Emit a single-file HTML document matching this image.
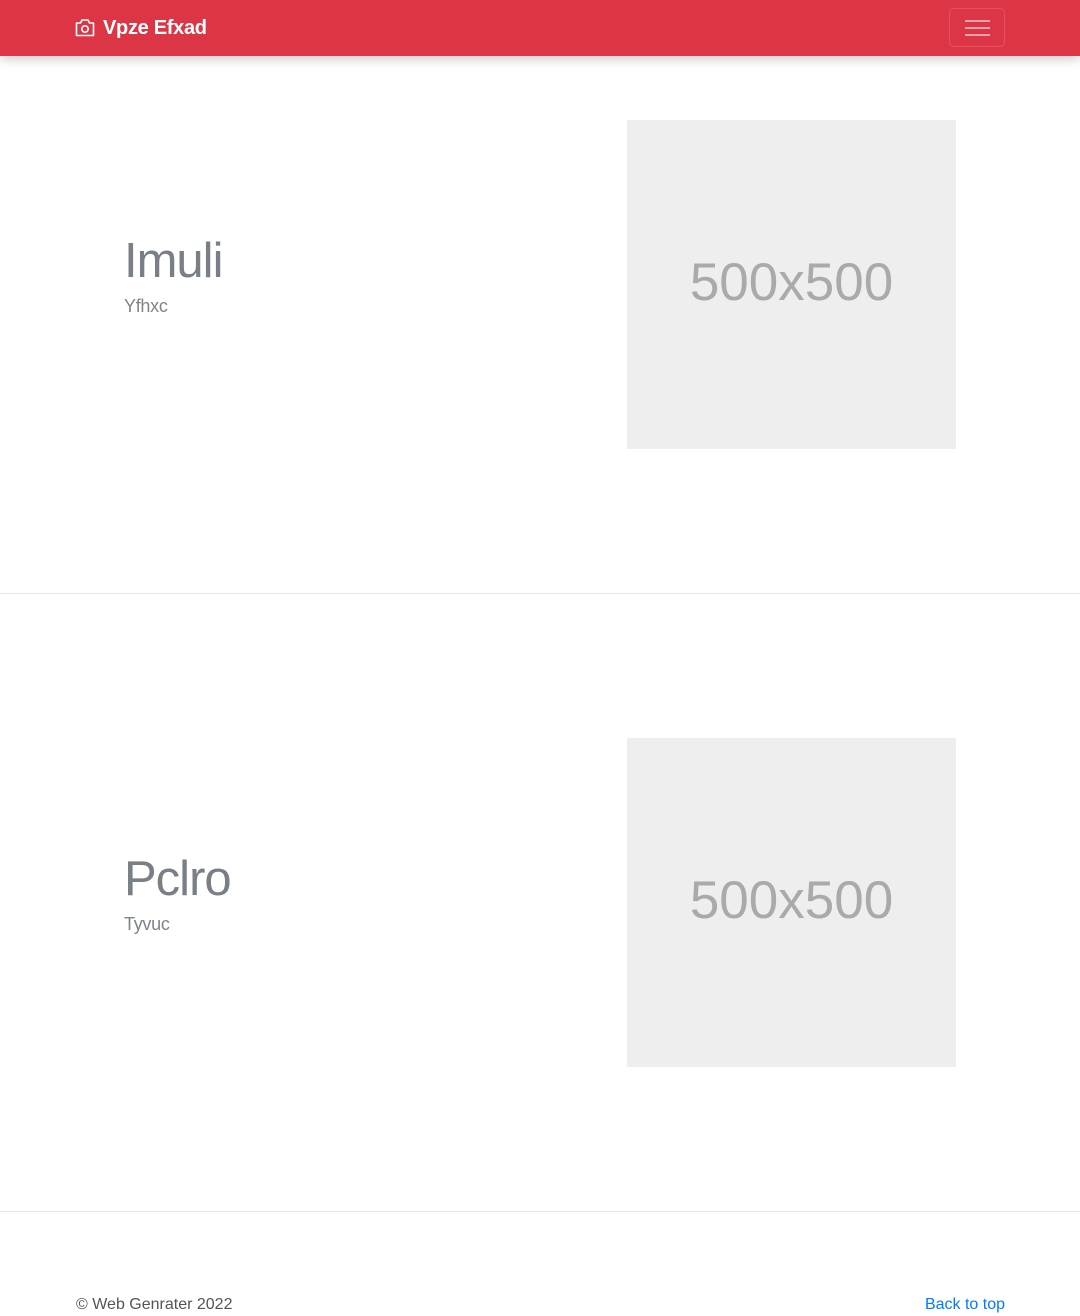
<!DOCTYPE html>
<html><head><meta charset="utf-8"><style>
*{margin:0;padding:0;box-sizing:border-box}
body{width:1080px;height:1316px;position:relative;background:#fff;font-family:"Liberation Sans",sans-serif;overflow:hidden}
.nav{position:absolute;left:0;top:0;width:1080px;height:56px;background:#dc3545;box-shadow:0 4px 10px rgba(0,0,0,.18)}
.brand{position:absolute;left:103px;top:17px;color:#fff;font-weight:bold;font-size:20px;letter-spacing:-0.3px}
.tog{position:absolute;left:949px;top:8px;width:56px;height:39px;border:1px solid rgba(255,255,255,.15);border-radius:5px}
.tog i{position:absolute;left:15px;width:25px;height:2px;background:rgba(255,255,255,.55)}
.hr{position:absolute;left:0;width:1080px;height:1px;background:#e5e5e5}
.img{position:absolute;left:627px;width:329px;height:329px;background:#eeeeee;color:#aaa;font-size:53px;text-align:center;line-height:325px}
h1{position:absolute;left:124px;font-weight:normal;font-size:49px;color:#787f86;line-height:1;letter-spacing:-1px}
p.s{position:absolute;left:124px;font-size:18px;color:#7d848a;letter-spacing:-0.3px}
.f{position:absolute;top:1296px;font-size:16px}
</style></head><body>
<div class="nav">
<svg style="position:absolute;left:75px;top:18px" width="20" height="19" viewBox="0 0 20 19"><path d="M1.5 5h4l1.5-3h6l1.5 3h4v12.5h-17z" fill="none" stroke="#fff" stroke-width="1.6" stroke-linejoin="round"/><circle cx="10" cy="11" r="3.2" fill="none" stroke="#fff" stroke-width="1.6"/></svg>
<div class="brand">Vpze Efxad</div>
<div class="tog"><i style="top:11px"></i><i style="top:18px"></i><i style="top:25px"></i></div>
</div>
<h1 style="top:237px">Imuli</h1>
<p class="s" style="top:296px">Yfhxc</p>
<div class="img" style="top:120px">500x500</div>
<div class="hr" style="top:593px"></div>
<h1 style="top:855px">Pclro</h1>
<p class="s" style="top:914px">Tyvuc</p>
<div class="img" style="top:738px">500x500</div>
<div class="hr" style="top:1211px"></div>
<div class="f" style="left:76px;color:#555">© Web Genrater 2022</div>
<div class="f" style="right:75px;color:#007bff">Back to top</div>
</body></html>
